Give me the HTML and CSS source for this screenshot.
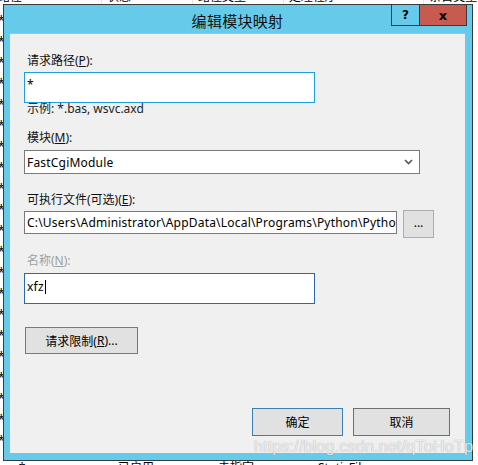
FILE: index.html
```html
<!DOCTYPE html>
<html lang="zh-CN">
<head>
<meta charset="utf-8">
<title>编辑模块映射</title>
<link rel="stylesheet" href="styles.css">
</head>
<body>
<div class="desktop">
  <div class="list-head">
    <span class="col c1">路径</span><span class="col c2">状态</span><span class="col c3">路径类型</span><span class="col c4">处理程序</span><span class="col c5">条目类型</span>
  </div>
  <div class="list-rows">
    <div class="row"><span class="col c1">*.axd</span><span class="col c5">本地</span></div>
    <div class="row"><span class="col c1">*.xoml</span><span class="col c5">本地</span></div>
    <div class="row"><span class="col c1">*.xamlx</span><span class="col c5">本地</span></div>
    <div class="row"><span class="col c1">*.rules</span><span class="col c5">本地</span></div>
    <div class="row"><span class="col c1">*.svc</span><span class="col c5">本地</span></div>
    <div class="row"><span class="col c1">*.soap</span><span class="col c5">本地</span></div>
    <div class="row"><span class="col c1">*.rem</span><span class="col c5">本地</span></div>
    <div class="row"><span class="col c1">*.asmx</span><span class="col c5">本地</span></div>
    <div class="row"><span class="col c1">*.aspx</span><span class="col c5">本地</span></div>
    <div class="row"><span class="col c1">*.ashx</span><span class="col c5">本地</span></div>
    <div class="row"><span class="col c1">*.cshtm</span><span class="col c5">本地</span></div>
    <div class="row"><span class="col c1">*.vbhtm</span><span class="col c5">本地</span></div>
    <div class="row"><span class="col c1">*.shtm</span><span class="col c5">本地</span></div>
    <div class="row"><span class="col c1">*.stm</span><span class="col c5">本地</span></div>
    <div class="row"><span class="col c1">*.shtml</span><span class="col c5">本地</span></div>
    <div class="row"><span class="col c1">*.dll</span><span class="col c5">本地</span></div>
    <div class="row"><span class="col c1">*.exe</span><span class="col c5">本地</span></div>
    <div class="row"><span class="col c1">*.asp</span><span class="col c5">本地</span></div>
    <div class="row"><span class="col c1">*.cer</span><span class="col c5">本地</span></div>
    <div class="row"><span class="col c1">*.cdx</span><span class="col c5">本地</span></div>
    <div class="row"><span class="col c1">*.asa</span><span class="col c5">本地</span></div>
  </div>
  <div class="list-last">
    <span class="col c1">&nbsp;&nbsp;&nbsp;&nbsp;&nbsp;&nbsp;*</span><span class="col c2">已启用</span><span class="col c3">未指定</span><span class="col c4">StaticFile</span>
  </div>
</div>

<div class="dialog">
  <div class="titlebar">
    <span class="title">编辑模块映射</span>
    <div class="caption-buttons">
      <span class="cap-btn help">?</span><span class="cap-btn close">x</span>
    </div>
  </div>
  <div class="content">
    <label class="label first">请求路径(<u>P</u>):</label>
    <div class="field wide focus">*</div>
    <div class="hint">示例: *.bas, wsvc.axd</div>

    <label class="label l-module">模块(<u>M</u>):</label>
    <div class="field select">
      <span>FastCgiModule</span>
      <svg class="chev" width="9" height="6" viewBox="0 0 9 6"><polyline points="1,1 4.5,4.5 8,1" fill="none" stroke="#555" stroke-width="1.6"/></svg>
    </div>

    <label class="label l-exec">可执行文件(可选)(<u>E</u>):</label>
    <div class="exec-row">
      <div class="field exec">C:\Users\Administrator\AppData\Local\Programs\Python\Python37\python.exe|C:\inetpub\wwwroot\wfastcgi.py</div>
      <button class="btn browse">...</button>
    </div>

    <label class="label l-name disabled">名称(<u>N</u>):</label>
    <div class="field wide named">xfz<span class="caret"></span></div>

    <button class="btn restrict">请求限制(<u>R</u>)...</button>

    <div class="footer">
      <button class="btn ok">确定</button>
      <button class="btn cancel">取消</button>
    </div>
  </div>
  <div class="watermark">https://blog.csdn.net/qToHoTp</div>
</div>
</body>
</html>
```
FILE: styles.css
```css
html, body {
  margin: 0;
  padding: 0;
  width: 478px;
  height: 465px;
  overflow: hidden;
  background: #ffffff;
  font-family: "Noto Sans", "Noto Sans CJK SC", sans-serif;
  font-size: 12px;
  color: #000;
}

/* background window (list behind the dialog) */
.desktop {
  width: 478px;
  height: 465px;
  display: flex;
  flex-direction: column;
  overflow: hidden;
}
.list-head, .row, .list-last {
  position: relative;
  display: flex;
  white-space: nowrap;
  line-height: 16px;
  height: 16px;
}
.list-head {
  margin-top: -11px;
  flex: none;
}
.list-head .c1 { text-indent: -2px; }
.list-head .c2, .list-head .c3, .list-head .c4, .list-head .c5 {
  border-left: 1px solid #e5e5e5;
  padding-left: 5px;
  box-sizing: border-box;
}
.list-last .c2, .list-last .c3, .list-last .c4 {
  padding-left: 6px;
  box-sizing: border-box;
}
.list-rows {
  flex: 1;
  overflow: hidden;
  padding-top: 5px;
}
.row {
  height: 21px;
  line-height: 21px;
}
.list-last {
  flex: none;
  height: 5px;
  overflow: hidden;
  line-height: 16px;
}
.col { display: block; overflow: hidden; }
.c1 { width: 112px; }
.c2 { width: 100px; }
.c3 { width: 100px; }
.c4 { width: 155px; }
.c5 { width: 60px; }
.row .c1 { width: 469px; text-indent: -2px; }

/* dialog window */
.dialog {
  position: absolute;
  left: 3px;
  top: 4px;
  width: 470px;
  height: 457px;
  box-sizing: border-box;
  border: 1px solid #3a3a3a;
  background: #66caea;
  display: flex;
  flex-direction: column;
  padding: 0 7px 7px 6px;
}
.titlebar {
  height: 28px;
  flex: none;
  display: flex;
  justify-content: center;
  align-items: center;
  font-size: 15px;
  color: #111;
  padding-top: 2px;
  box-sizing: border-box;
}
.title { letter-spacing: 0.3px; }
.caption-buttons {
  position: absolute;
  top: -1px;
  right: 5px;
  height: 22px;
  display: flex;
  border: 1px solid #3a3a3a;
  box-sizing: border-box;
}
.cap-btn {
  display: flex;
  align-items: center;
  justify-content: center;
  font-family: "DejaVu Sans", sans-serif;
  font-weight: bold;
  font-size: 12px;
  color: #000;
  height: 20px;
}
.cap-btn.help {
  width: 27px;
  border-right: 1px solid #3a3a3a;
}
.cap-btn.close {
  width: 46px;
  background: #c75b50;
  font-size: 13px;
}

.content {
  flex: 1;
  background: #f0f0f0;
  border-top: 1px solid #9cc5d6;
  display: flex;
  flex-direction: column;
  align-items: flex-start;
  padding: 19px 15px 17px 14px;
  box-sizing: border-box;
}
.label {
  display: block;
  line-height: 16px;
  height: 16px;
  margin-left: 3px;
  color: #111;
}
.label.disabled { color: #a0a0a0; }
.label u { text-underline-offset: 1px; }
.l-module { margin-top: 14px; }
.l-exec { margin-top: 18px; }
.l-name { margin-top: 15px; }

.field {
  box-sizing: border-box;
  background: #fff;
  border: 1px solid #7a7a7a;
  padding: 0 2px;
  white-space: nowrap;
  overflow: hidden;
  display: flex;
  align-items: center;
  color: #000;
  letter-spacing: 0.2px;
}
.field.wide {
  width: 291px;
  height: 31px;
  margin-top: 3px;
  align-items: flex-start;
  padding-top: 4px;
  line-height: 16px;
}
.field.focus { border-color: #1f9fe0; }
.field.named { border-color: #2d69a6; margin-top: 4px; padding-top: 5px; }
.caret {
  display: inline-block;
  width: 1px;
  height: 14px;
  background: #000;
  margin-top: 1px;
  margin-left: 1px;
}
.hint {
  margin-top: -1px;
  margin-left: 3px;
  line-height: 14px;
  height: 14px;
  color: #222;
}
.field.select {
  width: 396px;
  height: 24px;
  margin-top: 4px;
  justify-content: space-between;
  padding-right: 6px;
}
.chev { flex: none; }

.exec-row {
  margin-top: 2px;
  display: flex;
  align-items: flex-start;
  gap: 6px;
}
.field.exec {
  width: 373px;
  height: 23px;
  margin-top: 1px;
  border-color: #7a7a7a;
}

.btn {
  box-sizing: border-box;
  background: #e1e1e1;
  border: 1px solid #adadad;
  font-family: "Noto Sans", "Noto Sans CJK SC", sans-serif;
  font-size: 12px;
  color: #000;
  padding: 0;
  margin: 0;
  display: flex;
  align-items: center;
  justify-content: center;
}
.btn.browse {
  width: 31px;
  height: 28px;
  padding-bottom: 3px;
}
.btn.restrict {
  width: 113px;
  height: 27px;
  margin-top: 23px;
  margin-left: 1px;
  border-color: #7a7a7a;
}
.footer {
  margin-top: auto;
  align-self: stretch;
  display: flex;
  justify-content: flex-end;
  gap: 10px;
}
.btn.ok {
  width: 91px;
  height: 28px;
  border-color: #3c7fb1;
}
.btn.cancel {
  width: 97px;
  height: 28px;
  border-color: #707070;
}

.watermark {
  position: absolute;
  left: 250px;
  top: 432px;
  font-family: "Liberation Sans", sans-serif;
  font-size: 16.5px;
  color: rgba(255, 255, 255, 0.8);
  text-shadow: 0 0 1px rgba(90, 90, 90, 0.6);
  white-space: nowrap;
  pointer-events: none;
}
```
